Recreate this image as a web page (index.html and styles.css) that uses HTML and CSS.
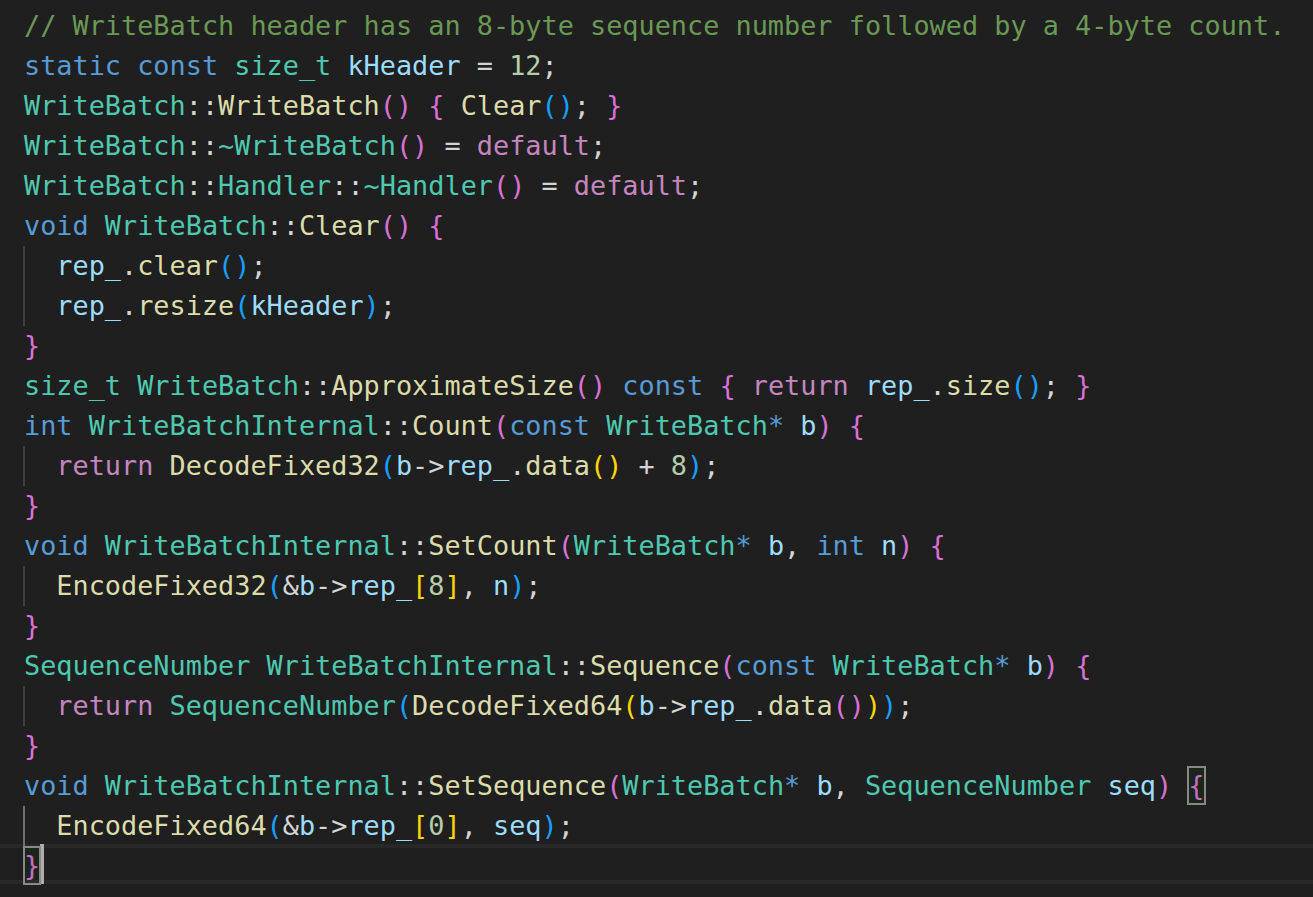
FILE: index.html
```html
<!DOCTYPE html>
<html lang="en">
<head>
<meta charset="utf-8">
<title>write_batch.cc</title>
<link rel="stylesheet" href="styles.css">
</head>
<body>
<div class="editor">
<div class="line"><span class="c">// WriteBatch header has an 8-byte sequence number followed by a 4-byte count.</span></div>
<div class="line"><span class="k">static</span> <span class="k">const</span> <span class="t">size_t</span> <span class="v">kHeader</span> = <span class="n">12</span>;</div>
<div class="line"><span class="t">WriteBatch</span>::<span class="f">WriteBatch</span><span class="b2">()</span> <span class="b2">{</span> <span class="f">Clear</span><span class="b3">()</span>; <span class="b2">}</span></div>
<div class="line"><span class="t">WriteBatch</span>::<span class="t">~WriteBatch</span><span class="b2">()</span> = <span class="x">default</span>;</div>
<div class="line"><span class="t">WriteBatch</span>::<span class="t">Handler</span>::<span class="t">~Handler</span><span class="b2">()</span> = <span class="x">default</span>;</div>
<div class="line"><span class="k">void</span> <span class="t">WriteBatch</span>::<span class="f">Clear</span><span class="b2">()</span> <span class="b2">{</span></div>
<div class="line"><span class="guide"></span><span class="v">rep_</span>.<span class="f">clear</span><span class="b3">()</span>;</div>
<div class="line"><span class="guide"></span><span class="v">rep_</span>.<span class="f">resize</span><span class="b3">(</span><span class="v">kHeader</span><span class="b3">)</span>;</div>
<div class="line"><span class="b2">}</span></div>
<div class="line"><span class="t">size_t</span> <span class="t">WriteBatch</span>::<span class="f">ApproximateSize</span><span class="b2">()</span> <span class="k">const</span> <span class="b2">{</span> <span class="x">return</span> <span class="v">rep_</span>.<span class="f">size</span><span class="b3">()</span>; <span class="b2">}</span></div>
<div class="line"><span class="k">int</span> <span class="t">WriteBatchInternal</span>::<span class="f">Count</span><span class="b2">(</span><span class="k">const</span> <span class="t">WriteBatch</span><span class="k">*</span> <span class="v">b</span><span class="b2">)</span> <span class="b2">{</span></div>
<div class="line"><span class="guide"></span><span class="x">return</span> <span class="f">DecodeFixed32</span><span class="b3">(</span><span class="v">b</span>-&gt;<span class="v">rep_</span>.<span class="f">data</span><span class="b1">()</span> + <span class="n">8</span><span class="b3">)</span>;</div>
<div class="line"><span class="b2">}</span></div>
<div class="line"><span class="k">void</span> <span class="t">WriteBatchInternal</span>::<span class="f">SetCount</span><span class="b2">(</span><span class="t">WriteBatch</span><span class="k">*</span> <span class="v">b</span>, <span class="k">int</span> <span class="v">n</span><span class="b2">)</span> <span class="b2">{</span></div>
<div class="line"><span class="guide"></span><span class="f">EncodeFixed32</span><span class="b3">(</span>&amp;<span class="v">b</span>-&gt;<span class="v">rep_</span><span class="b1">[</span><span class="n">8</span><span class="b1">]</span>, <span class="v">n</span><span class="b3">)</span>;</div>
<div class="line"><span class="b2">}</span></div>
<div class="line"><span class="t">SequenceNumber</span> <span class="t">WriteBatchInternal</span>::<span class="f">Sequence</span><span class="b2">(</span><span class="k">const</span> <span class="t">WriteBatch</span><span class="k">*</span> <span class="v">b</span><span class="b2">)</span> <span class="b2">{</span></div>
<div class="line"><span class="guide"></span><span class="x">return</span> <span class="t">SequenceNumber</span><span class="b3">(</span><span class="f">DecodeFixed64</span><span class="b1">(</span><span class="v">b</span>-&gt;<span class="v">rep_</span>.<span class="f">data</span><span class="b2">()</span><span class="b1">)</span><span class="b3">)</span>;</div>
<div class="line"><span class="b2">}</span></div>
<div class="line"><span class="k">void</span> <span class="t">WriteBatchInternal</span>::<span class="f">SetSequence</span><span class="b2">(</span><span class="t">WriteBatch</span><span class="k">*</span> <span class="v">b</span>, <span class="t">SequenceNumber</span> <span class="v">seq</span><span class="b2">)</span> <span class="b2 match">{</span></div>
<div class="line"><span class="guide active"></span><span class="f">EncodeFixed64</span><span class="b3">(</span>&amp;<span class="v">b</span>-&gt;<span class="v">rep_</span><span class="b1">[</span><span class="n">0</span><span class="b1">]</span>, <span class="v">seq</span><span class="b3">)</span>;</div>
<div class="line current"><span class="b2 match">}</span><span class="cursor"></span></div>
</div>
</body>
</html>
```
FILE: styles.css
```css
html, body {
  margin: 0;
  padding: 0;
  background: #1f1f1f;
}

body {
  width: 1313px;
  height: 897px;
  overflow: hidden;
}

.editor {
  padding: 4px 0 0 24px;
  font-family: "DejaVu Sans Mono", "Liberation Mono", monospace;
  font-size: 26.86px;
  color: #d4d4d4;
}

.line {
  height: 40px;
  box-sizing: border-box;
  padding-top: 2px;
  line-height: 40px;
  white-space: pre;
}

.line.current {
  margin-left: -24px;
  padding-left: 24px;
  box-shadow: inset 0 4px 0 #282828, inset 0 -4px 0 #282828;
}

.guide {
  display: inline-block;
  box-sizing: border-box;
  width: calc(2ch + 1px);
  height: 40px;
  margin-left: -1px;
  vertical-align: top;
  border-left: 2px solid #404040;
}

.guide.active {
  border-left-color: #707070;
}

.c { color: #6a9955; }
.k { color: #569cd6; }
.t { color: #4ec9b0; }
.f { color: #dcdcaa; }
.v { color: #9cdcfe; }
.n { color: #b5cea8; }
.x { color: #c586c0; }
.b1 { color: #ffd700; }
.b2 { color: #da70d6; }
.b3 { color: #179fff; }

.match {
  position: relative;
}

.match::after {
  content: "";
  position: absolute;
  left: -1px;
  right: -1px;
  top: -4px;
  bottom: -4px;
  border: 2px solid #888888;
  background: rgba(0, 100, 0, 0.1);
}

.cursor {
  display: inline-block;
  width: 4px;
  height: 40px;
  vertical-align: top;
  margin-top: -2px;
  background: #aeafad;
}
```
